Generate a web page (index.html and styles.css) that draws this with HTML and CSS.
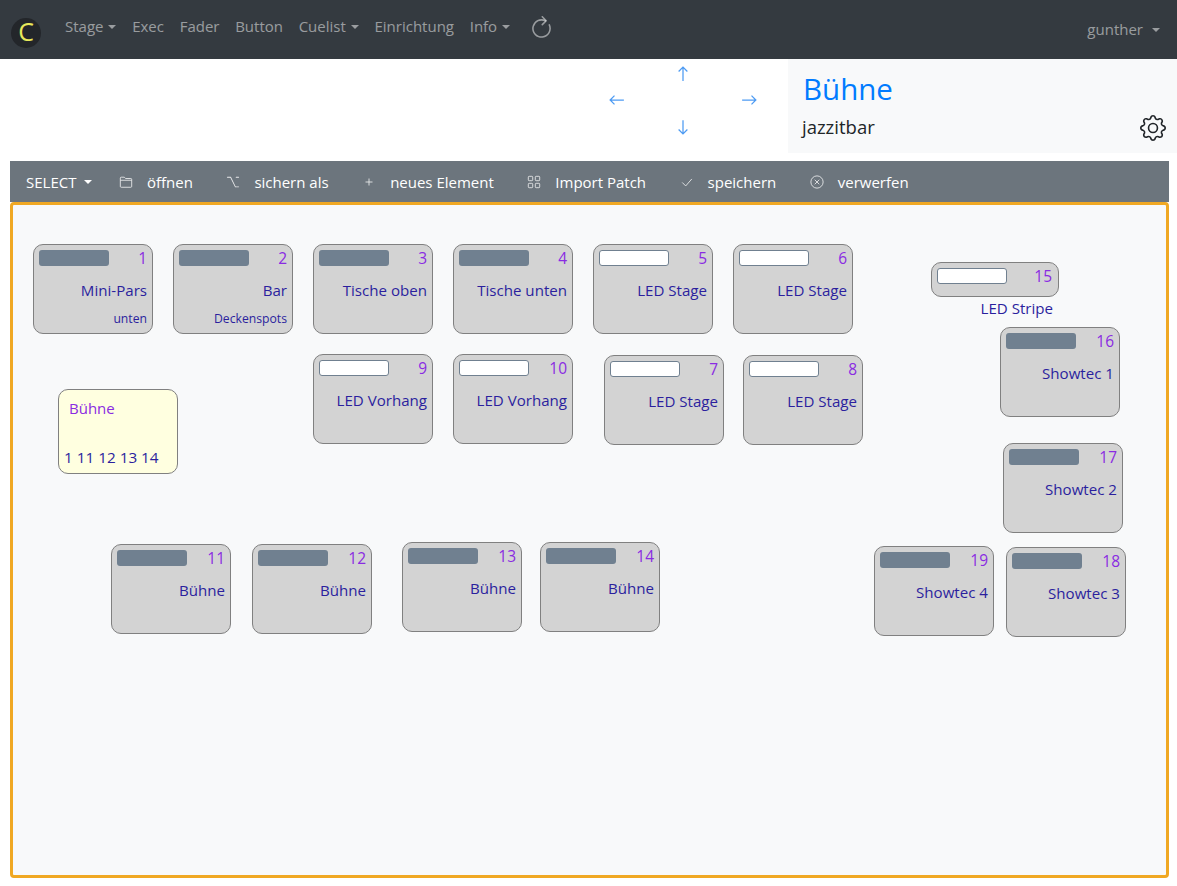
FILE: index.html
```html
<!DOCTYPE html>
<html lang="de">

<head>
    <meta charset="UTF-8" />
    <meta name="viewport" content="width=device-width, initial-scale=1.0" />
    <title>Bühne</title>
    <link rel="stylesheet" href="styles.css">
</head>

<body>

    <!-- navigation -->
    <nav class="navbar">
        <div class="brand"><span class="brand-letter">C</span></div>
        <ul class="nav-list">
            <li class="nav-item caret">Stage</li>
            <li class="nav-item">Exec</li>
            <li class="nav-item">Fader</li>
            <li class="nav-item">Button</li>
            <li class="nav-item caret">Cuelist</li>
            <li class="nav-item">Einrichtung</li>
            <li class="nav-item caret">Info</li>
        </ul>
        <svg class="reload-icon" viewBox="0 0 16 16" fill="currentColor">
            <path fill-rule="evenodd" d="M3.17 6.706a5 5 0 0 1 7.103-3.16.5.5 0 1 0 .454-.892A6 6 0 1 0 13.455 5.5a.5.5 0 0 0-.91.417 5 5 0 1 1-9.375.789z" />
            <path fill-rule="evenodd" d="M8.147.146a.5.5 0 0 1 .707 0l2.5 2.5a.5.5 0 0 1 0 .708l-2.5 2.5a.5.5 0 1 1-.707-.708L10.293 3 8.147.854a.5.5 0 0 1 0-.708z" />
        </svg>
        <div class="nav-user caret">gunther</div>
    </nav>

    <!-- header -->
    <header class="page-head">
        <div class="pager">
            <svg class="arrow arrow-up" viewBox="0 0 16 16" fill="none" stroke="currentColor"><path d="M8 13.5V2.5M4.5 6 8 2.5 11.5 6" /></svg>
            <svg class="arrow arrow-left" viewBox="0 0 16 16" fill="none" stroke="currentColor"><path d="M13.5 8H2.5M6 4.5 2.5 8 6 11.5" /></svg>
            <svg class="arrow arrow-right" viewBox="0 0 16 16" fill="none" stroke="currentColor"><path d="M2.5 8h11M10 4.5 13.5 8 10 11.5" /></svg>
            <svg class="arrow arrow-down" viewBox="0 0 16 16" fill="none" stroke="currentColor"><path d="M8 2.5v11M4.5 10 8 13.5 11.5 10" /></svg>
        </div>
        <div class="title-panel">
            <h1 class="title">Bühne</h1>
            <div class="subtitle-row">
                <span class="subtitle">jazzitbar</span>
                <svg class="gear-icon" viewBox="0 0 16 16" fill="currentColor">
                    <path d="M8 4.754a3.246 3.246 0 1 0 0 6.492 3.246 3.246 0 0 0 0-6.492zM5.754 8a2.246 2.246 0 1 1 4.492 0 2.246 2.246 0 0 1-4.492 0z" />
                    <path d="M9.796 1.343c-.527-1.79-3.065-1.79-3.592 0l-.094.319a.873.873 0 0 1-1.255.52l-.292-.16c-1.64-.892-3.433.902-2.54 2.541l.159.292a.873.873 0 0 1-.52 1.255l-.319.094c-1.79.527-1.79 3.065 0 3.592l.319.094a.873.873 0 0 1 .52 1.255l-.16.292c-.892 1.64.901 3.434 2.541 2.54l.292-.159a.873.873 0 0 1 1.255.52l.094.319c.527 1.79 3.065 1.79 3.592 0l.094-.319a.873.873 0 0 1 1.255-.52l.292.16c1.64.893 3.434-.902 2.54-2.541l-.159-.292a.873.873 0 0 1 .52-1.255l.319-.094c1.79-.527 1.79-3.065 0-3.592l-.319-.094a.873.873 0 0 1-.52-1.255l.16-.292c.893-1.64-.902-3.433-2.541-2.54l-.292.159a.873.873 0 0 1-1.255-.52l-.094-.319zm-2.633.283c.246-.835 1.428-.835 1.674 0l.094.319a1.873 1.873 0 0 0 2.693 1.115l.291-.16c.764-.415 1.6.42 1.184 1.185l-.159.292a1.873 1.873 0 0 0 1.116 2.692l.318.094c.835.246.835 1.428 0 1.674l-.319.094a1.873 1.873 0 0 0-1.115 2.693l.16.291c.415.764-.42 1.6-1.185 1.184l-.291-.159a1.873 1.873 0 0 0-2.693 1.116l-.094.318c-.246.835-1.428.835-1.674 0l-.094-.319a1.873 1.873 0 0 0-2.692-1.115l-.292.16c-.764.415-1.6-.42-1.184-1.185l.159-.291A1.873 1.873 0 0 0 1.945 8.93l-.319-.094c-.835-.246-.835-1.428 0-1.674l.319-.094A1.873 1.873 0 0 0 3.06 4.377l-.16-.292c-.415-.764.42-1.6 1.185-1.184l.292.159a1.873 1.873 0 0 0 2.692-1.115l.094-.319z" />
                </svg>
            </div>
        </div>
    </header>

    <!-- toolbar -->
    <div class="toolbar">
        <span class="tool tool-select caret">SELECT</span>
        <span class="tool tool-open">
            <svg class="tool-icon" viewBox="0 0 16 16" fill="none" stroke="currentColor"><path d="M1.5 13V3.5a1 1 0 0 1 1-1h3.6l1.4 1.5h6a1 1 0 0 1 1 1V13a1 1 0 0 1-1 1h-11a1 1 0 0 1-1-1zM1.5 6h13" /></svg>
            öffnen
        </span>
        <span class="tool">
            <svg class="tool-icon" viewBox="0 0 16 16" fill="currentColor"><path d="M1 2.5a.5.5 0 0 1 .5-.5h3.797a.5.5 0 0 1 .439.26L11 13h3.5a.5.5 0 0 1 0 1h-3.797a.5.5 0 0 1-.439-.26L5 3H1.5a.5.5 0 0 1-.5-.5zm10 0a.5.5 0 0 1 .5-.5h3a.5.5 0 0 1 0 1h-3a.5.5 0 0 1-.5-.5z" /></svg>
            sichern als
        </span>
        <span class="tool">
            <svg class="tool-icon" viewBox="0 0 16 16" fill="none" stroke="currentColor"><path d="M8 4v8M4 8h8" /></svg>
            neues Element
        </span>
        <span class="tool">
            <svg class="tool-icon" viewBox="0 0 16 16" fill="none" stroke="currentColor"><rect x="1.5" y="1.5" width="5" height="5" rx="1" /><rect x="9.5" y="1.5" width="5" height="5" rx="1" /><rect x="1.5" y="9.5" width="5" height="5" rx="1" /><rect x="9.5" y="9.5" width="5" height="5" rx="1" /></svg>
            Import Patch
        </span>
        <span class="tool">
            <svg class="tool-icon" viewBox="0 0 16 16" fill="none" stroke="currentColor"><path d="M2.5 8.5 6.5 12.5 13.5 4.5" /></svg>
            speichern
        </span>
        <span class="tool">
            <svg class="tool-icon" viewBox="0 0 16 16" fill="none" stroke="currentColor"><circle cx="8" cy="8" r="7" /><path d="M5.4 5.4l5.2 5.2M10.6 5.4l-5.2 5.2" /></svg>
            verwerfen
        </span>
    </div>

    <!-- canvas -->
    <main class="stage">
        <div class="node n1"><div class="node-top"><span class="level"></span><span class="num">1</span></div><div class="name">Mini-Pars</div><div class="sub">unten</div></div>
        <div class="node n2"><div class="node-top"><span class="level"></span><span class="num">2</span></div><div class="name">Bar</div><div class="sub">Deckenspots</div></div>
        <div class="node n3"><div class="node-top"><span class="level"></span><span class="num">3</span></div><div class="name">Tische oben</div></div>
        <div class="node n4"><div class="node-top"><span class="level"></span><span class="num">4</span></div><div class="name">Tische unten</div></div>
        <div class="node n5"><div class="node-top"><span class="level on"></span><span class="num">5</span></div><div class="name">LED Stage</div></div>
        <div class="node n6"><div class="node-top"><span class="level on"></span><span class="num">6</span></div><div class="name">LED Stage</div></div>
        <div class="node n9"><div class="node-top"><span class="level on"></span><span class="num">9</span></div><div class="name">LED Vorhang</div></div>
        <div class="node n10"><div class="node-top"><span class="level on"></span><span class="num">10</span></div><div class="name">LED Vorhang</div></div>
        <div class="node n7"><div class="node-top"><span class="level on"></span><span class="num">7</span></div><div class="name">LED Stage</div></div>
        <div class="node n8"><div class="node-top"><span class="level on"></span><span class="num">8</span></div><div class="name">LED Stage</div></div>

        <div class="group">
            <div class="group-name">Bühne</div>
            <div class="group-members">1 11 12 13 14</div>
        </div>

        <div class="node n11"><div class="node-top"><span class="level"></span><span class="num">11</span></div><div class="name">Bühne</div></div>
        <div class="node n12"><div class="node-top"><span class="level"></span><span class="num">12</span></div><div class="name">Bühne</div></div>
        <div class="node n13"><div class="node-top"><span class="level"></span><span class="num">13</span></div><div class="name">Bühne</div></div>
        <div class="node n14"><div class="node-top"><span class="level"></span><span class="num">14</span></div><div class="name">Bühne</div></div>

        <div class="node node-flat n15"><div class="node-top"><span class="level on"></span><span class="num">15</span></div><div class="name">LED Stripe</div></div>
        <div class="node n16"><div class="node-top"><span class="level"></span><span class="num">16</span></div><div class="name">Showtec 1</div></div>
        <div class="node n17"><div class="node-top"><span class="level"></span><span class="num">17</span></div><div class="name">Showtec 2</div></div>
        <div class="node n19"><div class="node-top"><span class="level"></span><span class="num">19</span></div><div class="name">Showtec 4</div></div>
        <div class="node n18"><div class="node-top"><span class="level"></span><span class="num">18</span></div><div class="name">Showtec 3</div></div>
    </main>

</body>

</html>
```

FILE: styles.css
```css
* {
    box-sizing: border-box;
}

body {
    margin: 0;
    height: 886px;
    overflow: hidden;
    background: #fff;
    font-family: "Open Sans", "Noto Sans", sans-serif;
    font-size: 15px;
    color: #212529;
}

.caret::after {
    content: "";
    display: inline-block;
    margin-left: 5px;
    vertical-align: 3px;
    border-top: 4px solid currentColor;
    border-left: 4px solid transparent;
    border-right: 4px solid transparent;
}

/* navbar */
.navbar {
    display: flex;
    align-items: center;
    height: 59px;
    padding: 0 17px 7px 11px;
    background: #343a40;
    color: rgba(255, 255, 255, 0.5);
}

.brand {
    display: flex;
    align-items: center;
    justify-content: center;
    width: 30px;
    height: 30px;
    margin-top: 13px;
    border-radius: 50%;
    background: #23262a;
}

.brand-letter {
    padding-bottom: 3px;
    font-size: 25px;
    line-height: 27px;
    color: #e8e85a;
}

.nav-list {
    display: flex;
    gap: 15.7px;
    margin: 0 0 0 24px;
    padding: 0;
    list-style: none;
}

.reload-icon {
    width: 25px;
    height: 25px;
    margin: 4px 0 0 19px;
}

.nav-user {
    margin: 5px 0 0 auto;
}

.nav-user::after {
    margin-left: 9px;
}

/* header */
.page-head {
    display: flex;
    justify-content: flex-end;
    height: 94px;
}

.pager {
    position: relative;
    width: 190px;
}

.arrow {
    position: absolute;
    width: 20px;
    height: 20px;
    color: #4d9bf3;
}

.arrow-up { left: 75px; top: 5px; }
.arrow-left { left: 9px; top: 31px; }
.arrow-right { left: 141px; top: 31px; }
.arrow-down { left: 75px; top: 58px; }

.title-panel {
    width: 389px;
    padding: 8px 11px 0 15px;
    background: #f8f9fa;
}

.title {
    margin: 0;
    font-size: 29.5px;
    font-weight: 400;
    line-height: 44px;
    color: #007bff;
}

.subtitle-row {
    display: flex;
    align-items: center;
    justify-content: space-between;
}

.subtitle {
    margin-left: -1px;
    font-size: 18.5px;
}

.gear-icon {
    width: 26px;
    height: 26px;
    margin-top: 4px;
    color: #212529;
}

/* toolbar */
.toolbar {
    display: flex;
    align-items: center;
    gap: 33.5px;
    height: 41px;
    margin: 8px 8px 0 10px;
    padding: 1px 0 0 16px;
    background: #6c757d;
    color: #fff;
}

.tool {
    display: inline-flex;
    align-items: center;
    gap: 14px;
}

.tool-select {
    gap: 8px;
}

.tool-select::after {
    margin-left: 0;
}

.tool-icon {
    width: 14px;
    height: 14px;
    opacity: 0.85;
}

.tool-open {
    margin-left: -7px;
}

/* canvas */
.stage {
    position: relative;
    height: 676px;
    margin: 0 8px 0 10px;
    border: 3px solid #f0a823;
    border-radius: 4px;
    background: #f8f9fa;
}

.node {
    position: absolute;
    display: flex;
    flex-direction: column;
    width: 120px;
    height: 90px;
    padding: 5px 5px 0 5px;
    border: 1px solid #808080;
    border-radius: 10px;
    background: #d3d3d3;
    color: #2b1f9e;
    text-align: right;
}

.node-top {
    display: flex;
    justify-content: space-between;
    height: 26px;
}

.level {
    width: 70px;
    height: 16px;
    border-radius: 3px;
    background: #708090;
}

.level.on {
    border: 1px solid #708090;
    background: #fff;
}

.num {
    font-size: 15.5px;
    line-height: 17px;
    color: #8a2be2;
}

.name {
    margin-top: 4px;
    font-size: 15.1px;
    line-height: 20px;
}

.sub {
    margin-top: 11px;
    font-size: 12.2px;
    line-height: 16px;
}

.node-flat {
    width: 128px;
    height: 35px;
    overflow: visible;
}

.node-flat .num {
    margin-right: 1px;
}

.node-flat .name {
    position: absolute;
    top: 35px;
    right: 5px;
    margin: 0;
}

.group {
    position: absolute;
    left: 45px;
    top: 184px;
    width: 120px;
    height: 85px;
    padding: 8px 5px 0;
    border: 1px solid #808080;
    border-radius: 10px;
    background: #ffffe0;
    color: #2b1f9e;
}

.group-name {
    margin-left: 5px;
    line-height: 20px;
    color: #8a2be2;
}

.group-members {
    margin-top: 29px;
    font-size: 15.3px;
    line-height: 20px;
}

.n1 { left: 20px; top: 39px; }
.n2 { left: 160px; top: 39px; }
.n3 { left: 300px; top: 39px; }
.n4 { left: 440px; top: 39px; }
.n5 { left: 580px; top: 39px; }
.n6 { left: 720px; top: 39px; }
.n9 { left: 300px; top: 149px; }
.n10 { left: 440px; top: 149px; }
.n7 { left: 591px; top: 150px; }
.n8 { left: 730px; top: 150px; }
.n11 { left: 98px; top: 339px; }
.n12 { left: 239px; top: 339px; }
.n13 { left: 389px; top: 337px; }
.n14 { left: 527px; top: 337px; }
.n15 { left: 918px; top: 57px; }
.n16 { left: 987px; top: 122px; }
.n17 { left: 990px; top: 238px; }
.n19 { left: 861px; top: 341px; }
.n18 { left: 993px; top: 342px; }
```
